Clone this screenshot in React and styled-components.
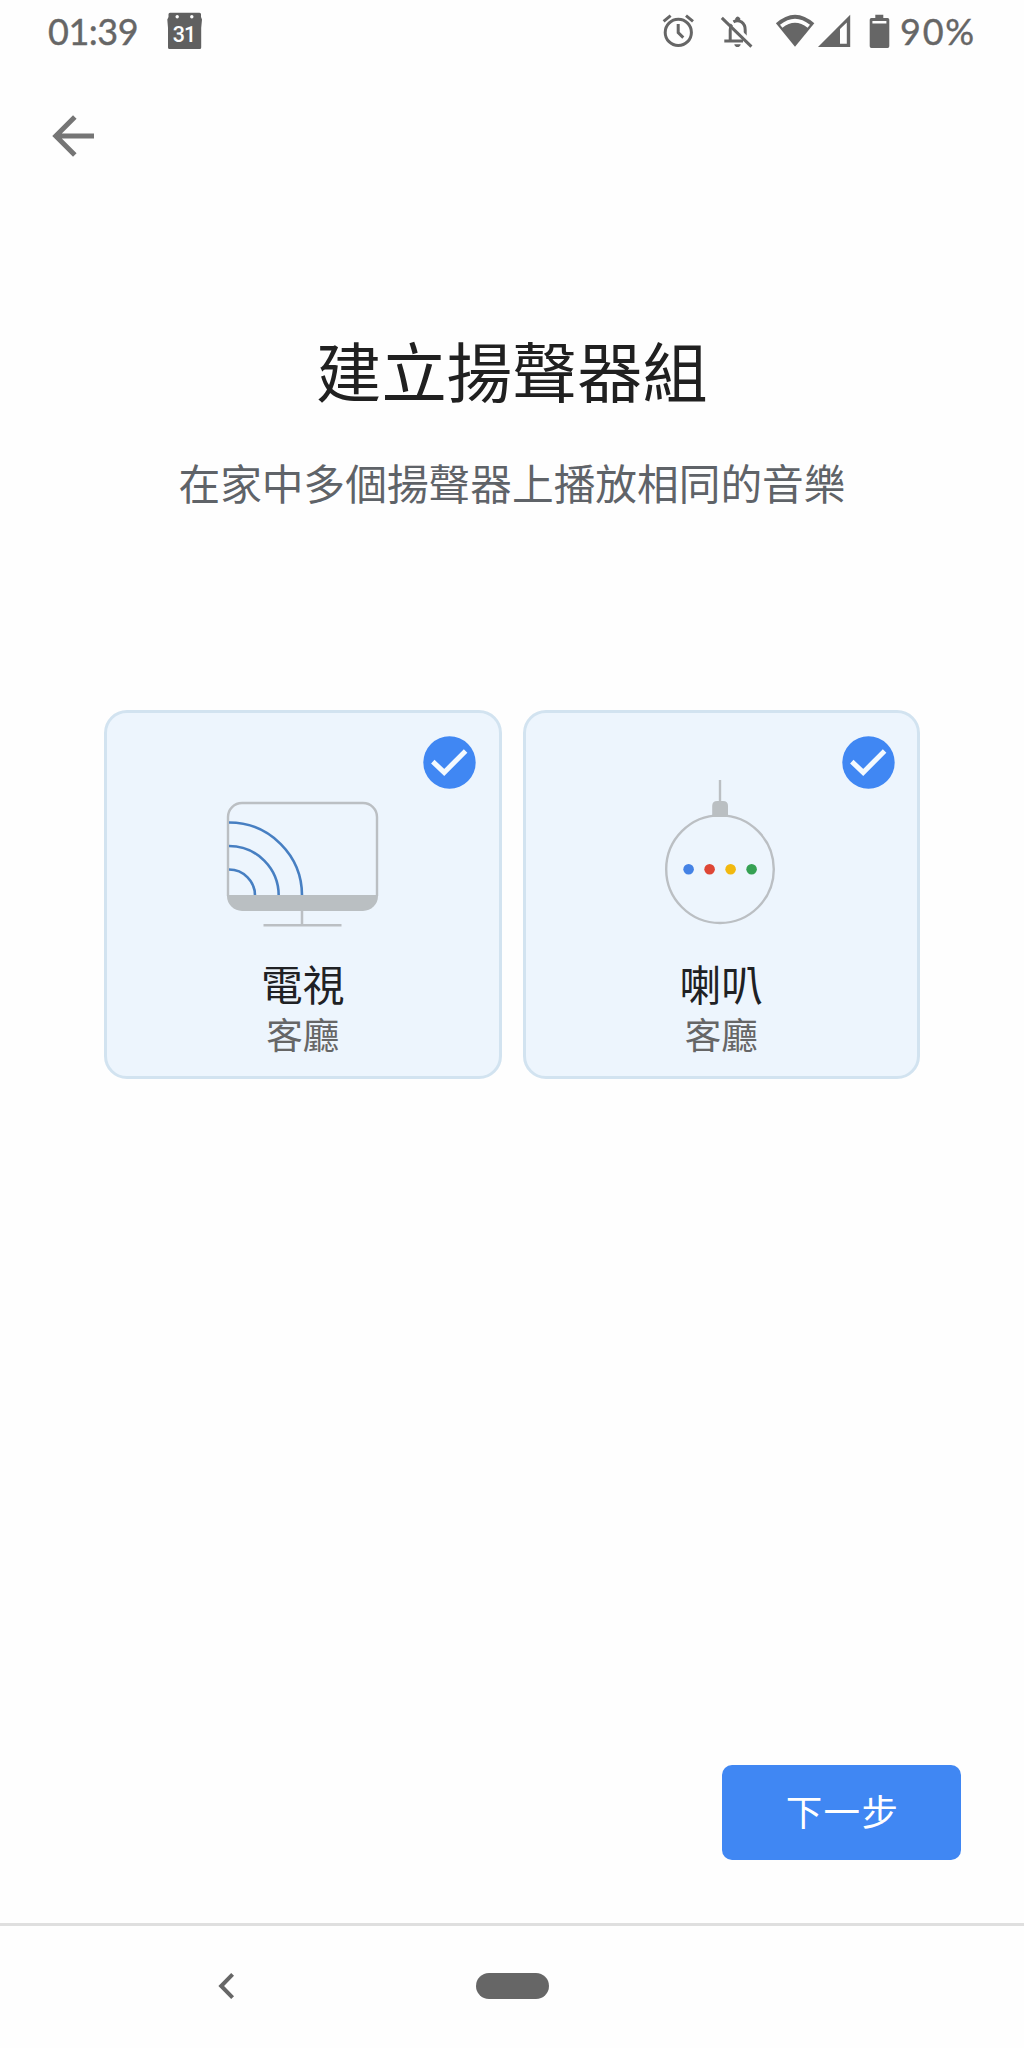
import React from 'react';
import styled, { createGlobalStyle } from 'styled-components';

const GlobalStyle = createGlobalStyle`
  *, *::before, *::after { box-sizing: border-box; }
  body { margin: 0; background: #fefefe; }
  svg { display: block; flex: none; }
`;

const cjk = '"Noto Sans CJK TC", "Noto Sans", sans-serif';

const Screen = styled.div`
  display: flex;
  flex-direction: column;
  width: 1024px;
  height: 2048px;
  background: #fefefe;
  font-family: ${cjk};
  overflow: hidden;
`;

const StatusBar = styled.header`
  display: flex;
  align-items: center;
  height: 62px;
  padding: 0 48px 0 48px;
  color: #666;
`;

const StatusText = styled.span`
  font-family: Lato, "Open Sans", sans-serif;
  font-size: 36px;
  line-height: 44px;
  width: ${(p) => p.$width}px;
  letter-spacing: ${(p) => p.$spacing}px;
  white-space: nowrap;
  -webkit-text-stroke: 0.4px currentColor;
`;

const StatusGroup = styled.div`
  display: flex;
  align-items: center;
  margin-left: ${(p) => (p.$end ? 'auto' : '0')};
`;

const IconSlot = styled.span`
  display: flex;
  margin-right: ${(p) => p.$after}px;
`;

const Toolbar = styled.nav`
  display: flex;
  align-items: center;
  height: 147px;
  padding-left: 52px;
`;

const IconButton = styled.button`
  display: flex;
  padding: 0;
  border: 0;
  background: none;
  color: ${(p) => p.$color};
`;

const Main = styled.main`
  flex: 1;
  display: flex;
  flex-direction: column;
  align-items: center;
`;

const Title = styled.h1`
  margin: 112px 0 0;
  font-size: 65.3px;
  line-height: 96px;
  font-weight: 400;
  color: #202020;
`;

const Subtitle = styled.p`
  margin: 35px 0 0;
  font-size: 41.7px;
  line-height: 60px;
  color: #5f6368;
`;

const Devices = styled.div`
  display: flex;
  gap: 21px;
  margin-top: 198px;
`;

const Card = styled.section`
  position: relative;
  display: flex;
  flex-direction: column;
  align-items: center;
  width: 397.5px;
  height: 369px;
  padding-top: 62px;
  border: 3px solid #d2e3f0;
  border-radius: 23px;
  background: #edf5fd;
`;

const CheckBadge = styled.span`
  position: absolute;
  top: 22.5px;
  right: 22.5px;
`;

const Illustration = styled.div`
  padding-right: 2px;
`;

const DeviceName = styled.div`
  margin-top: 23px;
  font-size: 41.7px;
  line-height: 50px;
  color: #202124;
`;

const RoomName = styled.div`
  margin-top: 3px;
  font-size: 36.5px;
  line-height: 46px;
  color: #666;
`;

const Actions = styled.footer`
  display: flex;
  justify-content: flex-end;
  width: 100%;
  margin-top: auto;
  padding: 0 63px 63px 0;
`;

const PrimaryButton = styled.button`
  width: 239px;
  height: 95px;
  padding: 0 0 5px 2px;
  border: 0;
  border-radius: 10px;
  background: #4087f3;
  color: #fff;
  font-family: ${cjk};
  font-size: 36.5px;
  letter-spacing: 1.4px;
`;

const SystemNav = styled.nav`
  display: grid;
  grid-template-columns: 1fr 73px 1fr;
  align-items: center;
  height: 125px;
  padding-bottom: 3px;
  border-top: 3px solid #dfdfdf;
`;

const BackSlot = styled.div`
  padding-left: 217px;
`;

const HomePill = styled.div`
  height: 26px;
  border-radius: 13px;
  background: #666;
`;

const CalendarIcon = () => (
  <svg width="36" height="38" viewBox="0 0 36 38">
    <path d="M3 .8H32.5Q34 .8 34 2.3V5L35 7.5 34.2 16V35.5Q34.2 37 32.7 37H2.5Q1 37 1 35.5V16L.3 7.5 1.5 5V2.3Q1.5 .8 3 .8Z" fill="#606060" />
    <circle cx="10.2" cy="4.8" r="1.7" fill="#fefefe" />
    <circle cx="24.8" cy="4.8" r="1.7" fill="#fefefe" />
    <text x="17" y="29.6" fill="#fefefe" fontFamily="Roboto, sans-serif" fontSize="21.5" fontWeight="500" textAnchor="middle" letterSpacing="-1">31</text>
  </svg>
);

const AlarmIcon = () => (
  <svg width="33" height="34" viewBox="0 0 33 34" fill="none" stroke="#666" strokeWidth="3">
    <circle cx="16.3" cy="18.4" r="13.1" />
    <path d="M16.2 10V18.7L21.3 23.6" />
    <path d="M1.6 7.4 8.6 1.7M24 1.7 31 7.4" />
  </svg>
);

const BellOffIcon = () => (
  <svg width="34" height="34" viewBox="0 0 34 34" fill="none" stroke="#666" strokeWidth="3">
    <path d="M10.2 27V16Q10.2 12 12.4 9.4" />
    <path d="M13.4 7.8C19.5 4.6 25.2 9 25.2 16V22" />
    <path d="M4.3 27H23" />
    <path d="M15.2 6.5V4.4Q17.7 .4 20.2 4.4V6.5Z" fill="#666" stroke="none" />
    <path d="M14.3 30.2H20.7Q20.2 33 17.5 33T14.3 30.2Z" fill="#666" stroke="none" />
    <path d="M4.5 1.6 34 30.2" stroke="#fefefe" strokeWidth="2.6" />
    <path d="M1.8 3.8 31.4 32.6" strokeWidth="3" />
  </svg>
);

const WifiIcon = () => (
  <svg width="40" height="34" viewBox="0 0 40 34">
    <path d="M.9 9.3Q20 -7.9 39.3 9.3L20 32.8Z" fill="#666" />
    <path d="M5 10.8Q20 -1.2 35 10.8L32.6 13.7Q20 4 7.4 13.7Z" fill="#fefefe" />
  </svg>
);

const SignalIcon = () => (
  <svg width="34" height="34" viewBox="0 0 34 34">
    <path fillRule="evenodd" d="M1 33 33.2 .8V33ZM23 15V29.8H29.8V8.6Z" fill="#666" />
  </svg>
);

const BatteryIcon = () => (
  <svg width="21" height="34" viewBox="0 0 21 34">
    <path fillRule="evenodd" d="M6.3 .8H14.3V4H18.6Q20.3 4 20.3 5.7V32.2Q20.3 33.9 18.6 33.9H2.4Q.7 33.9 .7 32.2V5.7Q.7 4 2.4 4H6.3ZM3.4 7V9.4H17.4V7Z" fill="#666" />
  </svg>
);

const ArrowBackIcon = () => (
  <svg width="44" height="44" viewBox="0 0 44 44" fill="none" stroke="currentColor" strokeWidth="5">
    <path d="M22.8 3 3.8 22 22.800 41M4 22H42" />
  </svg>
);

const ChevronIcon = () => (
  <svg width="18" height="28" viewBox="0 0 18 28" fill="none" stroke="currentColor" strokeWidth="4">
    <path d="M15.6 2.4 4.2 14 15.6 25.6" />
  </svg>
);

const CheckIcon = () => (
  <svg width="53" height="53" viewBox="0 0 53 53">
    <circle cx="26.5" cy="26.5" r="26.2" fill="#4087f3" />
    <path d="M9.8 25.6 21.2 36.4 42.600 15" fill="none" stroke="#f4faff" strokeWidth="5" />
  </svg>
);

const TvDrawing = () => (
  <svg width="160" height="160" viewBox="0 0 160 160" fill="none">
    <path d="M6 121V42A14 14 0 0 1 20 28H141A14 14 0 0 1 155 42V121" stroke="#bbbfc3" strokeWidth="2.4" />
    <g stroke="#477fc2" strokeWidth="2.6">
      <path d="M7 47.5A73 73 0 0 1 80 121" />
      <path d="M7 71A49.7 49.7 0 0 1 56.7 121" />
      <path d="M7 94.5A26 26 0 0 1 33 121" />
    </g>
    <path d="M5 120H156V121A15 15 0 0 1 141 136H20A15 15 0 0 1 5 121Z" fill="#babfc2" />
    <path d="M80 136V149M41.5 150.3H119.5" stroke="#bbbfc3" strokeWidth="2.5" />
  </svg>
);

const speakerLights = ['#4482e5', '#de4636', '#f2b90f', '#36a153'];

const SpeakerDrawing = () => (
  <svg width="160" height="160" viewBox="0 0 160 160" fill="none">
    <path d="M80 5V28" stroke="#bbbfc3" strokeWidth="2.4" />
    <circle cx="80" cy="94.2" r="53.8" stroke="#bbbfc3" strokeWidth="2.4" />
    <path d="M72.2 42V31Q72.2 26 77.2 26H83Q88 26 88 31V42Z" fill="#babfc2" />
    {speakerLights.map((color, i) => (
      <circle key={color} cx={48.6 + i * 21} cy="94.2" r="5.3" fill={color} />
    ))}
  </svg>
);

const devices = [
  { name: '電視', room: '客廳', Drawing: TvDrawing },
  { name: '喇叭', room: '客廳', Drawing: SpeakerDrawing },
];

const DeviceCard = ({ name, room, Drawing }) => (
  <Card>
    <CheckBadge><CheckIcon /></CheckBadge>
    <Illustration><Drawing /></Illustration>
    <DeviceName>{name}</DeviceName>
    <RoomName>{room}</RoomName>
  </Card>
);

export default function App() {
  return (
    <Screen>
      <GlobalStyle />
      <StatusBar>
        <StatusGroup>
          <StatusText $width={119} $spacing={-0.5}>01:39</StatusText>
          <CalendarIcon />
        </StatusGroup>
        <StatusGroup $end>
          <IconSlot $after={25}><AlarmIcon /></IconSlot>
          <IconSlot $after={21}><BellOffIcon /></IconSlot>
          <IconSlot $after={2}><WifiIcon /></IconSlot>
          <IconSlot $after={18}><SignalIcon /></IconSlot>
          <IconSlot $after={10}><BatteryIcon /></IconSlot>
          <StatusText $width={76} $spacing={1.8}>90%</StatusText>
        </StatusGroup>
      </StatusBar>
      <Toolbar>
        <IconButton $color="#757575" aria-label="返回"><ArrowBackIcon /></IconButton>
      </Toolbar>
      <Main>
        <Title>建立揚聲器組</Title>
        <Subtitle>在家中多個揚聲器上播放相同的音樂</Subtitle>
        <Devices>
          {devices.map((d) => <DeviceCard key={d.name} {...d} />)}
        </Devices>
        <Actions>
          <PrimaryButton>下一步</PrimaryButton>
        </Actions>
      </Main>
      <SystemNav>
        <BackSlot>
          <IconButton $color="#666" aria-label="返回"><ChevronIcon /></IconButton>
        </BackSlot>
        <HomePill />
      </SystemNav>
    </Screen>
  );
}
